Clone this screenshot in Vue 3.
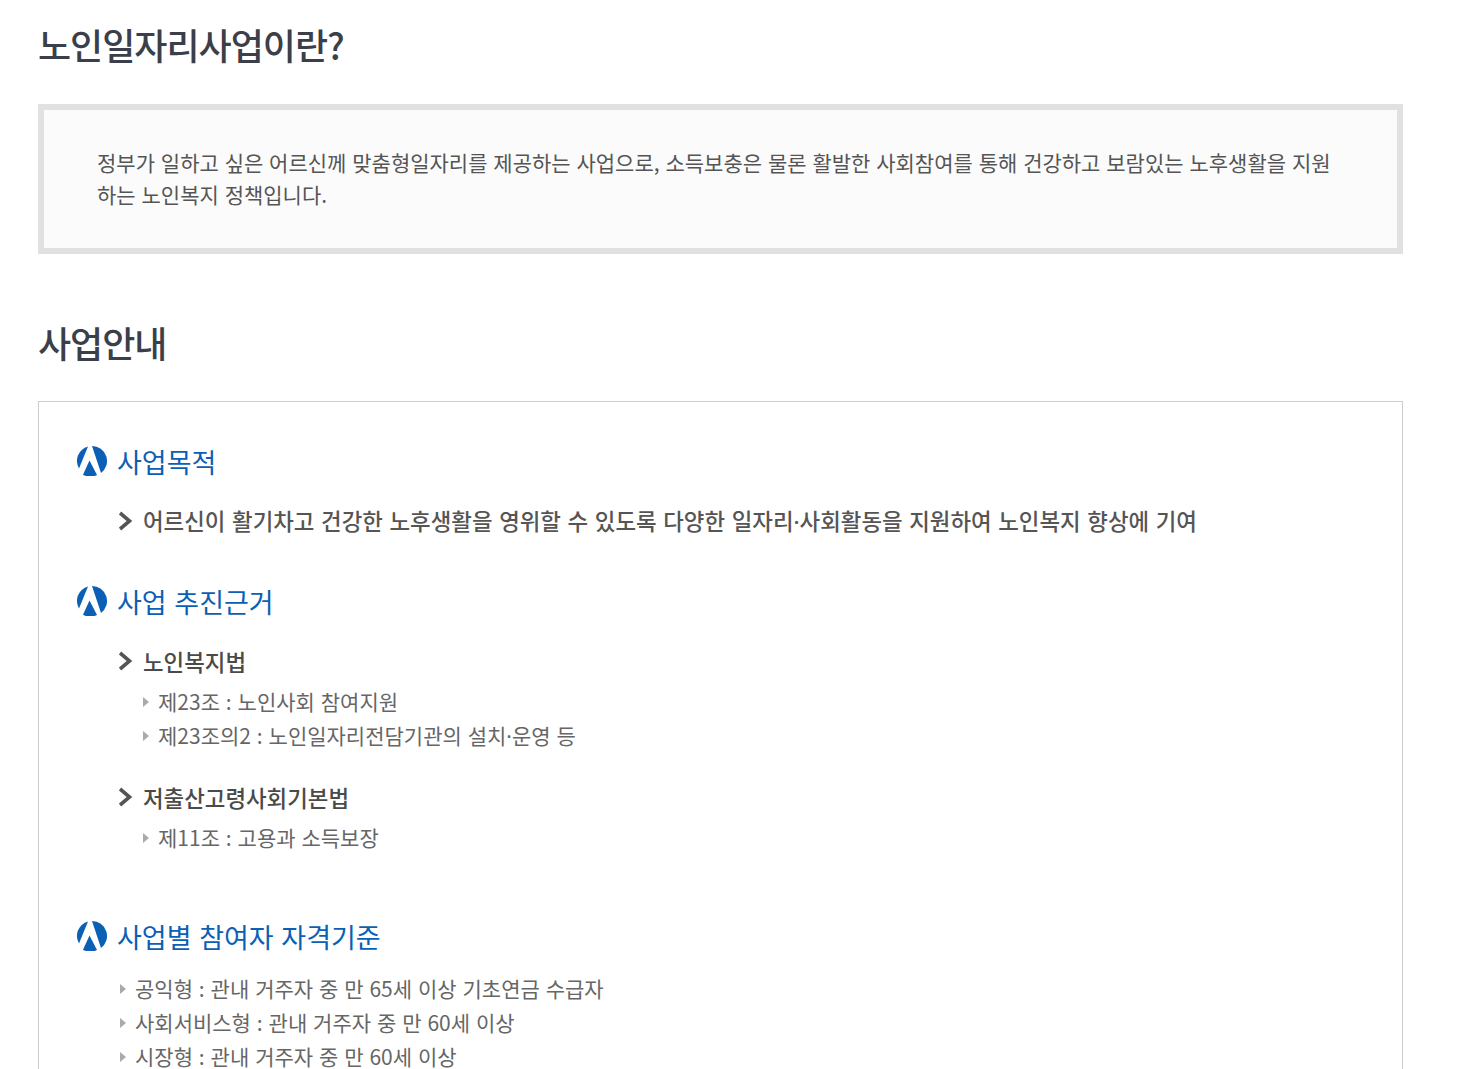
<script setup>
const law1 = [['제23조 : 노인사회 참여지원'], ['제23조의2 : 노인일자리전담기관의 설치', '운영 등']]
const law2 = [['제11조 : 고용과 소득보장']]
const quals = [['공익형 : 관내 거주자 중 만 65세 이상 기초연금 수급자'], ['사회서비스형 : 관내 거주자 중 만 60세 이상'], ['시장형 : 관내 거주자 중 만 60세 이상']]
</script>

<template>
  <div class="page">
    <h2 class="title first">노인일자리사업이란?</h2>
    <div class="intro">
      <p>정부가 일하고 싶은 어르신께 맞춤형일자리를 제공하는 사업으로, 소득보충은 물론 활발한 사회참여를 통해 건강하고 보람있는 노후생활을 지원하는 노인복지 정책입니다.</p>
    </div>
    <h2 class="title second">사업안내</h2>
    <div class="card">
      <h3 class="head">
        <svg class="logo" viewBox="0 0 30 30"><path class="b" d="M11 0.5 A15 15 0 0 0 2 22.5 Z" /><path class="b" d="M15 0 A15 15 0 0 1 24 27 Z" /><path class="b" d="M12.5 14.5 L20 29 A15 15 0 0 1 6 28.7 Z" /></svg>
        <span>사업목적</span>
      </h3>
      <div class="lead one"><svg class="chev" viewBox="0 0 14 20"><path d="M1 2 L10.5 10 L1 18" /></svg><span>어르신이 활기차고 건강한 노후생활을 영위할 수 있도록 다양한 일자리<span class="dot">·</span>사회활동을 지원하여 노인복지 향상에 기여</span></div>

      <h3 class="head h2">
        <svg class="logo" viewBox="0 0 30 30"><path class="b" d="M11 0.5 A15 15 0 0 0 2 22.5 Z" /><path class="b" d="M15 0 A15 15 0 0 1 24 27 Z" /><path class="b" d="M12.5 14.5 L20 29 A15 15 0 0 1 6 28.7 Z" /></svg>
        <span>사업 추진근거</span>
      </h3>
      <div class="lead two"><svg class="chev" viewBox="0 0 14 20"><path d="M1 2 L10.5 10 L1 18" /></svg>노인복지법</div>
      <ul class="sub">
        <li v-for="t in law1" :key="t[0]">{{ t[0] }}<template v-if="t[1]"><span class="dot">·</span>{{ t[1] }}</template></li>
      </ul>
      <div class="lead three"><svg class="chev" viewBox="0 0 14 20"><path d="M1 2 L10.5 10 L1 18" /></svg>저출산고령사회기본법</div>
      <ul class="sub">
        <li v-for="t in law2" :key="t[0]">{{ t[0] }}</li>
      </ul>

      <h3 class="head h3">
        <svg class="logo" viewBox="0 0 30 30"><path class="b" d="M11 0.5 A15 15 0 0 0 2 22.5 Z" /><path class="b" d="M15 0 A15 15 0 0 1 24 27 Z" /><path class="b" d="M12.5 14.5 L20 29 A15 15 0 0 1 6 28.7 Z" /></svg>
        <span>사업별 참여자 자격기준</span>
      </h3>
      <ul class="sub quals">
        <li v-for="t in quals" :key="t[0]">{{ t[0] }}</li>
      </ul>
    </div>
  </div>
</template>

<style>
html, body { margin: 0; background: #fff; overflow: hidden; }
</style>

<style scoped>
.page {
  height: 1069px;
  overflow: hidden;
  box-sizing: border-box;
  padding: 0 62px 0 38px;
  font-family: "Noto Sans CJK KR", "Noto Sans", sans-serif;
  color: #555;
}
.title {
  margin: 0;
  font-size: 36px;
  font-weight: 500;
  color: #3b3f4a;
  line-height: 52px;
  letter-spacing: -1px;
}
.first { padding-top: 18px; }
.second { margin-top: 62px; }
.intro {
  margin-top: 34px;
  border: 6px solid #e1e1e1;
  background: #fbfbfb;
  padding: 36px 53px 38px;
}
.intro p {
  margin: 0;
  font-size: 21px;
  line-height: 32px;
  word-spacing: 1.15px;
  color: #555;
}
.card {
  margin-top: 33px;
  border: 1px solid #ccc;
  padding: 40px 37px 40px;
}
.head {
  margin: 0;
  display: flex;
  align-items: flex-start;
  gap: 10px;
  padding-left: 1px;
  font-size: 27px;
  font-weight: 400;
  line-height: 40px;
  word-spacing: 1.6px;
  color: #0b5fb4;
}
.logo { width: 30px; height: 30px; flex: none; margin-top: 4px; filter: blur(0.3px); }
.b { fill: #0b5fb4; }
.lead {
  display: flex;
  align-items: center;
  margin-left: 43px;
  font-size: 22.4px;
  font-weight: 500;
  line-height: 32px;
  word-spacing: 0.8px;
  color: #4a4a4a;
}
.chev { width: 14px; height: 20px; margin-right: 10px; flex: none; filter: blur(0.3px); }
.chev path { fill: none; stroke: #555; stroke-width: 3.6; }
.dot { font-family: "Noto Sans", sans-serif; }
.one { margin-top: 22px; word-spacing: 1.6px; color: #555; }
.h2 { margin-top: 44px; }
.two { margin-top: 23px; }
.three { margin-top: 28px; }
.h3 { margin-top: 63px; }
.sub {
  list-style: none;
  margin: 7px 0 0 67px;
  padding: 0;
  font-size: 21px;
  line-height: 34px;
  word-spacing: 1.2px;
  color: #666;
}
.sub li { position: relative; padding-left: 15px; }
.sub li::before {
  content: "";
  position: absolute;
  left: 0;
  top: 13px;
  border-left: 6px solid #aaa;
  border-top: 5px solid transparent;
  border-bottom: 5px solid transparent;
}
.quals { margin: 14px 0 0 44px; }
</style>
